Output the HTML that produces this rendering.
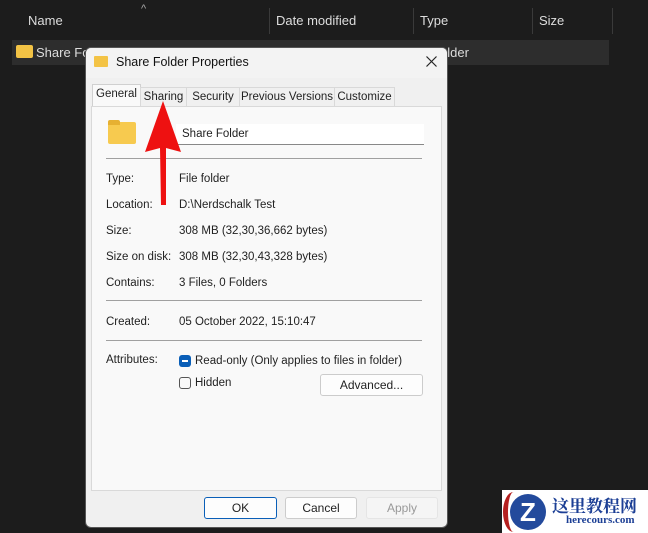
<!DOCTYPE html>
<html><head><style>
body{margin:0;width:648px;height:533px;background:#1c1c1c;font-family:"Liberation Sans",sans-serif;position:relative;overflow:hidden;font-size:12px}
.a{position:absolute}
.hd{color:#ddd;font-size:13px}
.sep{position:absolute;top:8px;width:1px;height:26px;background:#3a3a3a}
.t{position:absolute;color:#222;font-size:11.5px}
.line{position:absolute;left:106px;width:316px;height:1px;background:#a0a0a0}
.tab{position:absolute;top:87px;height:18px;border:1px solid #d9d9d9;border-bottom:none;background:#f0f0f0;font-size:11.5px;color:#222;text-align:center;line-height:18px}
.btn{position:absolute;top:497px;height:20px;border:1px solid #ccc;border-radius:3px;background:#fdfdfd;text-align:center;line-height:20px;font-size:12px;color:#222}
</style></head><body>
<div class="a hd" style="left:28px;top:13px">Name</div>
<div class="a" style="left:141px;top:3px;color:#aaa;font-size:11px">^</div>
<div class="sep" style="left:269px"></div>
<div class="a hd" style="left:276px;top:13px">Date modified</div>
<div class="sep" style="left:413px"></div>
<div class="a hd" style="left:420px;top:13px">Type</div>
<div class="sep" style="left:532px"></div>
<div class="a hd" style="left:539px;top:13px">Size</div>
<div class="sep" style="left:612px"></div>
<div class="a" style="left:12px;top:40px;width:597px;height:25px;background:#2d2d2d"></div>
<div class="a" style="left:16px;top:45px;width:17px;height:13px;background:#f3c345;border-radius:2px"></div>
<div class="a hd" style="left:36px;top:45px">Share Folder</div>
<div class="a hd" style="left:440px;top:45px">older</div>

<div class="a" style="left:85px;top:47px;width:361px;height:479px;background:#f0f0f0;border:1px solid #555;border-radius:6px;overflow:hidden">
 <div class="a" style="left:0;top:0;width:361px;height:30px;background:#f3f3f3"></div>
 <div class="a" style="left:8px;top:8px;width:14px;height:11px;background:#f3c345;border-radius:1px"></div>
 <div class="a" style="left:30px;top:7px;font-size:12.5px;color:#111">Share Folder Properties</div>
 <svg class="a" style="left:340px;top:8px" width="11" height="11"><path d="M0.5 0.5L10.5 10.5M10.5 0.5L0.5 10.5" stroke="#222" stroke-width="1.2"/></svg>
 <div class="a" style="left:5px;top:58px;width:349px;height:383px;background:#f9f9f9;border:1px solid #d9d9d9"></div>
</div>
<div class="tab" style="left:92px;top:84px;height:21px;width:47px;background:#f9f9f9;border-color:#d0d0d0">General</div>
<div class="tab" style="left:140px;width:45px">Sharing</div>
<div class="tab" style="left:186px;width:52px">Security</div>
<div class="tab" style="left:239px;width:94px">Previous Versions</div>
<div class="tab" style="left:334px;width:59px">Customize</div>

<div class="a" style="left:108px;top:122px;width:28px;height:22px;background:#f7ca4f;border-radius:2px"></div>
<div class="a" style="left:108px;top:120px;width:12px;height:5px;background:#e6b032;border-radius:2px 2px 0 0"></div>
<div class="a" style="left:176px;top:124px;width:248px;height:20px;background:#fff;border-bottom:1px solid #888"></div>
<div class="t" style="left:182px;top:128px">Share Folder</div>
<div class="line" style="top:158px"></div>
<div class="t" style="left:106px;top:173px">Type:</div><div class="t" style="left:179px;top:173px">File folder</div>
<div class="t" style="left:106px;top:199px">Location:</div><div class="t" style="left:179px;top:199px">D:\Nerdschalk Test</div>
<div class="t" style="left:106px;top:225px">Size:</div><div class="t" style="left:179px;top:225px">308 MB (32,30,36,662 bytes)</div>
<div class="t" style="left:106px;top:251px">Size on disk:</div><div class="t" style="left:179px;top:251px">308 MB (32,30,43,328 bytes)</div>
<div class="t" style="left:106px;top:277px">Contains:</div><div class="t" style="left:179px;top:277px">3 Files, 0 Folders</div>
<div class="line" style="top:300px"></div>
<div class="t" style="left:106px;top:316px">Created:</div><div class="t" style="left:179px;top:316px">05 October 2022, 15:10:47</div>
<div class="line" style="top:340px"></div>
<div class="t" style="left:106px;top:354px">Attributes:</div>
<div class="a" style="left:179px;top:355px;width:12px;height:12px;background:#0a5fb8;border-radius:3px"></div>
<div class="a" style="left:182px;top:360px;width:6px;height:1.5px;background:#fff"></div>
<div class="t" style="left:195px;top:355px">Read-only (Only applies to files in folder)</div>
<div class="a" style="left:179px;top:377px;width:10px;height:10px;border:1px solid #555;border-radius:3px"></div>
<div class="t" style="left:195px;top:377px">Hidden</div>
<div class="btn" style="left:320px;top:374px;width:101px">Advanced...</div>
<div class="btn" style="left:204px;width:71px;border-color:#0a5fb8">OK</div>
<div class="btn" style="left:285px;width:70px">Cancel</div>
<div class="btn" style="left:366px;width:70px;color:#999;border-color:#e5e5e5;background:#f5f5f5">Apply</div>

<svg class="a" style="left:0;top:0" width="648" height="533"><polygon points="163,101 145,152 160,148 161,205 166,205 166,148 181,152" fill="#ee1111"/></svg>

<div class="a" style="left:502px;top:490px;width:146px;height:43px;background:#fff"></div>
<div class="a" style="left:510px;top:494px;width:36px;height:36px;border-radius:50%;background:#234a9c;color:#fff;font-weight:bold;font-size:26px;text-align:center;line-height:36px">Z</div>
<div class="a" style="left:503px;top:492px;width:16px;height:40px;border-left:5px solid #b52020;border-radius:50%"></div>
<div class="a" style="left:552px;top:492px;color:#1c3f95;font-weight:bold;font-size:17px;font-family:'Noto Serif CJK SC',serif">这里教程网</div>
<div class="a" style="left:566px;top:514px;color:#1c3f95;font-weight:bold;font-size:11px;font-family:'Liberation Serif',serif">herecours.com</div>
</body></html>
